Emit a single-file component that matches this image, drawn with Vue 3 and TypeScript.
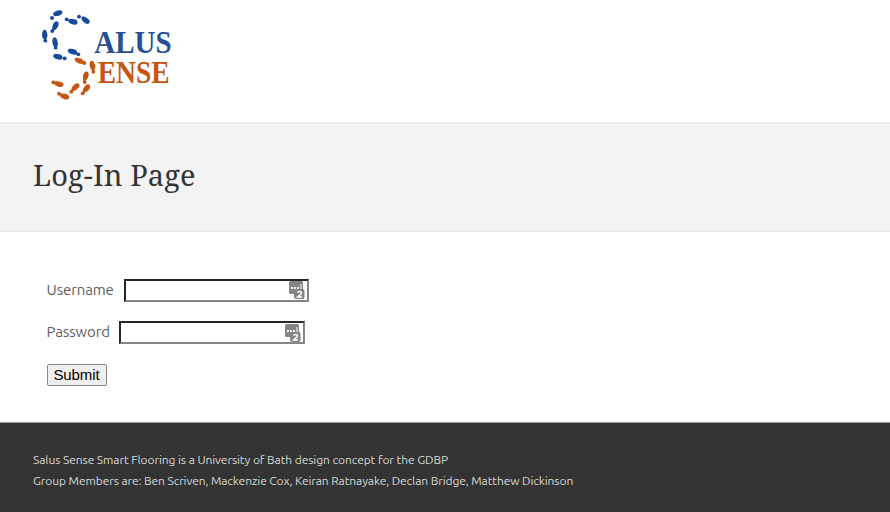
<script setup lang="ts">
import { ref } from 'vue'

interface Footprint {
  x: number
  y: number
  angle: number
  heelX: number
  heelY: number
  tone: 'blue' | 'orange'
}

const footprints: Footprint[] = [
  { x: 83, y: 40, angle: -17, heelX: 66, heelY: 54, tone: 'blue' },
  { x: 76, y: 78, angle: -65, heelX: 67, heelY: 93, tone: 'blue' },
  { x: 44, y: 103, angle: 88, heelX: 46, heelY: 122, tone: 'blue' },
  { x: 75, y: 126, angle: 82, heelX: 77, heelY: 143, tone: 'blue' },
  { x: 83, y: 170, angle: 15, heelX: 104, heelY: 175, tone: 'blue' },
  { x: 127, y: 155, angle: 17, heelX: 145, heelY: 163, tone: 'blue' },
  { x: 128, y: 65, angle: 14, heelX: 110, heelY: 58, tone: 'blue' },
  { x: 166, y: 60, angle: 38, heelX: 147, heelY: 50, tone: 'blue' },
  { x: 147, y: 182, angle: 22, heelX: 163, heelY: 189, tone: 'orange' },
  { x: 187, y: 196, angle: 78, heelX: 190, heelY: 215, tone: 'orange' },
  { x: 167, y: 229, angle: -74, heelX: 164, heelY: 246, tone: 'orange' },
  { x: 169, y: 266, angle: -52, heelX: 158, heelY: 280, tone: 'orange' },
  { x: 136, y: 262, angle: -42, heelX: 124, heelY: 275, tone: 'orange' },
  { x: 103, y: 289, angle: 20, heelX: 87, heelY: 281, tone: 'orange' },
  { x: 86, y: 252, angle: 15, heelX: 70, heelY: 247, tone: 'orange' },
]

const username = ref('')
const password = ref('')
</script>

<template>
  <div class="page">
    <header class="top">
      <svg class="logo" viewBox="0 0 480 330" role="img" aria-label="Salus Sense">
        <g v-for="(f, i) in footprints" :key="i" :class="f.tone">
          <path
            d="M-14-1C-13-6-7-7 0-8C8-9 15-6 15 0C15 6 8 8 1 8C-6 7-14 6-14-1Z"
            :transform="`translate(${f.x} ${f.y}) rotate(${f.angle})`"
          />
          <circle :cx="f.heelX" :cy="f.heelY" r="5.8" />
        </g>
        <text class="word blue" x="193" y="158" textLength="232" lengthAdjust="spacingAndGlyphs">ALUS</text>
        <text class="word orange" x="203" y="248" textLength="216" lengthAdjust="spacingAndGlyphs">ENSE</text>
      </svg>
    </header>

    <section class="banner">
      <h1>Log-In Page</h1>
    </section>

    <main>
      <form @submit.prevent>
        <div class="row user-row">
          <label for="username">Username</label>
          <div class="field">
            <input id="username" v-model="username" type="text" />
            <svg class="manager" viewBox="0 0 16 18">
              <rect width="14" height="13" rx="1.5" />
              <rect x="5" y="8" width="10.5" height="10" rx="2" />
              <path class="mark" d="M2 6h1.8v2H2zM5 6h1.8v2H5zM8 6h1.8v2H8zM11.5 3h1v5h-1z" />
              <path class="digit" d="M8.5 11.5C9.5 10 12.5 10 12.5 12C12.5 13.2 10 14.2 8.5 16H13" />
            </svg>
          </div>
        </div>
        <div class="row pass-row">
          <label for="password">Password</label>
          <div class="field">
            <input id="password" v-model="password" type="password" />
            <svg class="manager" viewBox="0 0 16 18">
              <rect width="14" height="13" rx="1.5" />
              <rect x="5" y="8" width="10.5" height="10" rx="2" />
              <path class="mark" d="M2 6h1.8v2H2zM5 6h1.8v2H5zM8 6h1.8v2H8zM11.5 3h1v5h-1z" />
              <path class="digit" d="M8.5 11.5C9.5 10 12.5 10 12.5 12C12.5 13.2 10 14.2 8.5 16H13" />
            </svg>
          </div>
        </div>
        <button type="submit">Submit</button>
      </form>
    </main>

    <footer>
      <p class="concept">Salus Sense Smart Flooring is a University of Bath design concept for the GDBP</p>
      <p class="members">Group Members are: Ben Scriven, Mackenzie Cox, Keiran Ratnayake, Declan Bridge, Matthew Dickinson</p>
    </footer>
  </div>
</template>

<style>
body {
  margin: 0;
  background: #fff;
}
</style>

<style scoped>
.page {
  display: flex;
  flex-direction: column;
  height: 512px;
  overflow: hidden;
  font-family: Ubuntu, "Noto Sans", sans-serif;
}
.top {
  flex: none;
  height: 122px;
  padding-left: 30px;
}
.logo {
  display: block;
  width: 160px;
  height: 110px;
}
.blue {
  fill: #174a9c;
}
.orange {
  fill: #c6560f;
}
.word {
  font: bold 94px "Liberation Serif", serif;
}
.word.blue {
  fill: #275093;
}
.banner {
  flex: none;
  box-sizing: border-box;
  height: 110px;
  padding: 31px 33px 0;
  background: #f3f3f3;
  border-top: 2px solid #ebebeb;
  border-bottom: 1px solid #e6e6e6;
}
h1 {
  margin: 0;
  font: 400 29px/40px "Noto Serif", "Droid Serif", "DejaVu Serif Condensed", "DejaVu Serif", serif;
  letter-spacing: 0.13px;
  white-space: nowrap;
  color: #333;
}
main {
  flex: none;
  box-sizing: border-box;
  height: 190px;
  padding: 47px 46.5px 0;
}
.row {
  display: grid;
  align-items: start;
}
.user-row {
  grid-template-columns: 77.5px 185px;
  height: 22px;
  margin-bottom: 20px;
}
.pass-row {
  grid-template-columns: 72.5px 185.5px;
  height: 23px;
  margin-bottom: 20px;
}
label {
  font-size: 15px;
  line-height: 22px;
  letter-spacing: -0.12px;
  white-space: nowrap;
  color: #606060;
}
.user-row label,
.pass-row label {
  line-height: 21px;
}
.field {
  position: relative;
  height: 100%;
}
input {
  box-sizing: border-box;
  display: block;
  width: 100%;
  height: 100%;
  padding: 1px 22px 1px 2px;
  border: 2px solid;
  border-color: #262626 #858585 #858585 #262626;
  border-radius: 0;
  background: #fff;
  font: 15px "Liberation Sans", sans-serif;
  outline: none;
}
.manager {
  position: absolute;
  top: 2px;
  right: 4px;
  width: 16px;
  height: 18px;
  fill: #858585;
}
.pass-row .manager {
  top: 3px;
}
.mark {
  fill: #fff;
}
.digit {
  fill: none;
  stroke: #fff;
  stroke-width: 1.5;
}
button {
  display: block;
  box-sizing: border-box;
  width: 60px;
  height: 22px;
  padding: 0;
  border: 1px solid #858585;
  border-radius: 2px;
  background: #efefef;
  color: #000;
  font: 15px/20px "Liberation Sans", Arial, sans-serif;
  letter-spacing: -0.1px;
}
footer {
  flex: 1;
  padding: 26px 33px 0;
  border-top: 1px solid #999;
  background: #333;
  color: #d8d8d8;
  font-size: 12px;
  line-height: 21px;
}
footer p {
  margin: 0;
  white-space: nowrap;
}
.concept {
  letter-spacing: -0.076px;
}
.members {
  letter-spacing: -0.092px;
}
</style>
